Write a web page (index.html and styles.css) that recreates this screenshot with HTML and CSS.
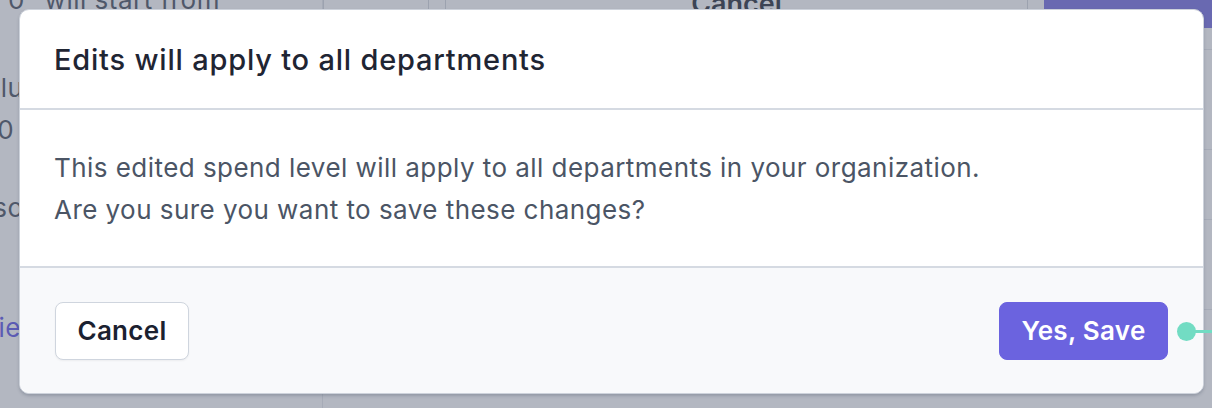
FILE: index.html
```html
<!DOCTYPE html>
<html lang="en">
<head>
<meta charset="utf-8">
<title>Edits will apply to all departments</title>
<link rel="stylesheet" href="styles.css">
</head>
<body>
<div class="page">
  <aside class="side">
    <p class="side-line first">“0” will start from</p>
    <p class="side-line l2">Inclu</p>
    <p class="side-line l3">$0</p>
    <p class="side-line l4">Also</p>
    <p class="side-line link">Vie</p>
  </aside>
  <main class="main">
    <div class="topbar">
      <div class="gap-cell"></div>
      <div class="bg-cancel">Cancel</div>
      <div class="bg-primary"></div>
    </div>
    <div class="rows">
      <div class="row r1"></div>
      <div class="row r2"></div>
      <div class="row r3"></div>
      <div class="row r4"></div>
    </div>
  </main>
</div>

<div class="overlay"></div>

<div class="modal" role="dialog">
  <header class="modal-head">
    <h2 class="modal-title">Edits will apply to all departments</h2>
  </header>
  <div class="modal-body">
    <p>This edited spend level will apply to all departments in your organization.</p>
    <p>Are you sure you want to save these changes?</p>
  </div>
  <footer class="modal-foot">
    <button class="btn btn-secondary">Cancel</button>
    <button class="btn btn-primary">Yes, Save</button>
  </footer>
  <div class="pin"><span class="pin-dot"></span><span class="pin-line"></span></div>
</div>
</body>
</html>
```

FILE: styles.css
```css
* { box-sizing: border-box; }
html, body { margin: 0; padding: 0; }
body {
  width: 1212px;
  height: 408px;
  overflow: hidden;
  font-family: Inter, "Noto Sans", sans-serif;
  background: #ffffff;
  position: relative;
}

/* background page */
.page {
  display: flex;
  height: 408px;
}
.side {
  width: 323px;
  border-right: 1px solid #e5e7eb;
  color: #374151;
  font-size: 26px;
  letter-spacing: 0.5px;
}
.side-line { margin: 0; line-height: 32px; white-space: nowrap; }
.side-line.first { margin-top: -16px; margin-left: -4px; }
.side-line.l2 { margin-top: 56px; margin-left: -38px; }
.side-line.l3 { margin-top: 10px; margin-left: -20px; }
.side-line.l4 { margin-top: 46px; margin-left: -32px; }
.side-line.link { margin-top: 88px; margin-left: -20px; color: #4f46e5; }

.main { flex: 1; display: flex; flex-direction: column; }
.topbar {
  display: flex;
  height: 28px;
  gap: 16px;
}
.gap-cell { width: 106px; border-left: 1px solid #d1d5db; border-right: 1px solid #d1d5db; }
.bg-cancel {
  flex: 1;
  margin-top: -20px;
  height: 46px;
  border: 1px solid #d1d5db;
  border-radius: 6px;
  display: flex;
  align-items: center;
  justify-content: center;
  font-weight: 600;
  font-size: 27px;
  color: #111827;
}
.bg-primary {
  width: 168px;
  background: #6b63df;
}
.rows { flex: 1; display: flex; flex-direction: column; }
.row { border-bottom: 1px solid #e5e7eb; }
.r1 { height: 22px; }
.r2 { height: 100px; }
.r3 { height: 70px; }
.r4 { height: 90px; }

.overlay {
  position: absolute;
  inset: 0;
  background: rgba(104, 112, 131, 0.5);
}

/* modal */
.modal {
  position: absolute;
  left: 19px;
  top: 9px;
  width: 1185px;
  height: 385px;
  background: #ffffff;
  border: 1px solid #cdd2db;
  border-radius: 10px;
  box-shadow: 0 2px 3px rgba(60, 70, 90, 0.25);
  display: flex;
  flex-direction: column;
}
.modal-head {
  height: 100px;
  padding: 0 34px;
  display: flex;
  align-items: center;
  border-bottom: 2px solid #d5dae2;
}
.modal-title {
  margin: 0;
  font-size: 29px;
  font-weight: 500;
  letter-spacing: 0.8px;
  color: #1f2533;
}
.modal-body {
  height: 158px;
  padding: 37px 34px 0;
  border-bottom: 2px solid #d5dae2;
  color: #4b5565;
  font-size: 26px;
  letter-spacing: 0.45px;
  line-height: 42px;
}
.modal-body p { margin: 0; }
.modal-foot {
  flex: 1;
  background: #f8f9fb;
  border-radius: 0 0 10px 10px;
  display: flex;
  align-items: center;
  justify-content: space-between;
  padding: 0 35px;
}
.btn {
  height: 58px;
  border-radius: 8px;
  font-family: Inter, "Noto Sans", sans-serif;
  font-size: 26px;
  font-weight: 600;
  letter-spacing: 0.3px;
  padding: 0;
  cursor: pointer;
}
.btn-secondary {
  background: #ffffff;
  border: 1px solid #cfd5de;
  color: #1b2130;
  box-shadow: 0 1px 2px rgba(0,0,0,0.05);
  width: 134px;
}
.btn-primary {
  background: #6b63df;
  border: 1px solid #6b63df;
  color: #ffffff;
  width: 169px;
}

.pin {
  position: absolute;
  left: 1157px;
  top: 312px;
  display: flex;
  align-items: center;
}
.pin-dot {
  width: 19px;
  height: 19px;
  border-radius: 50%;
  background: #72dcc3;
}
.pin-line {
  width: 30px;
  height: 3px;
  background: #72dcc3;
  margin-left: -2px;
}
```
